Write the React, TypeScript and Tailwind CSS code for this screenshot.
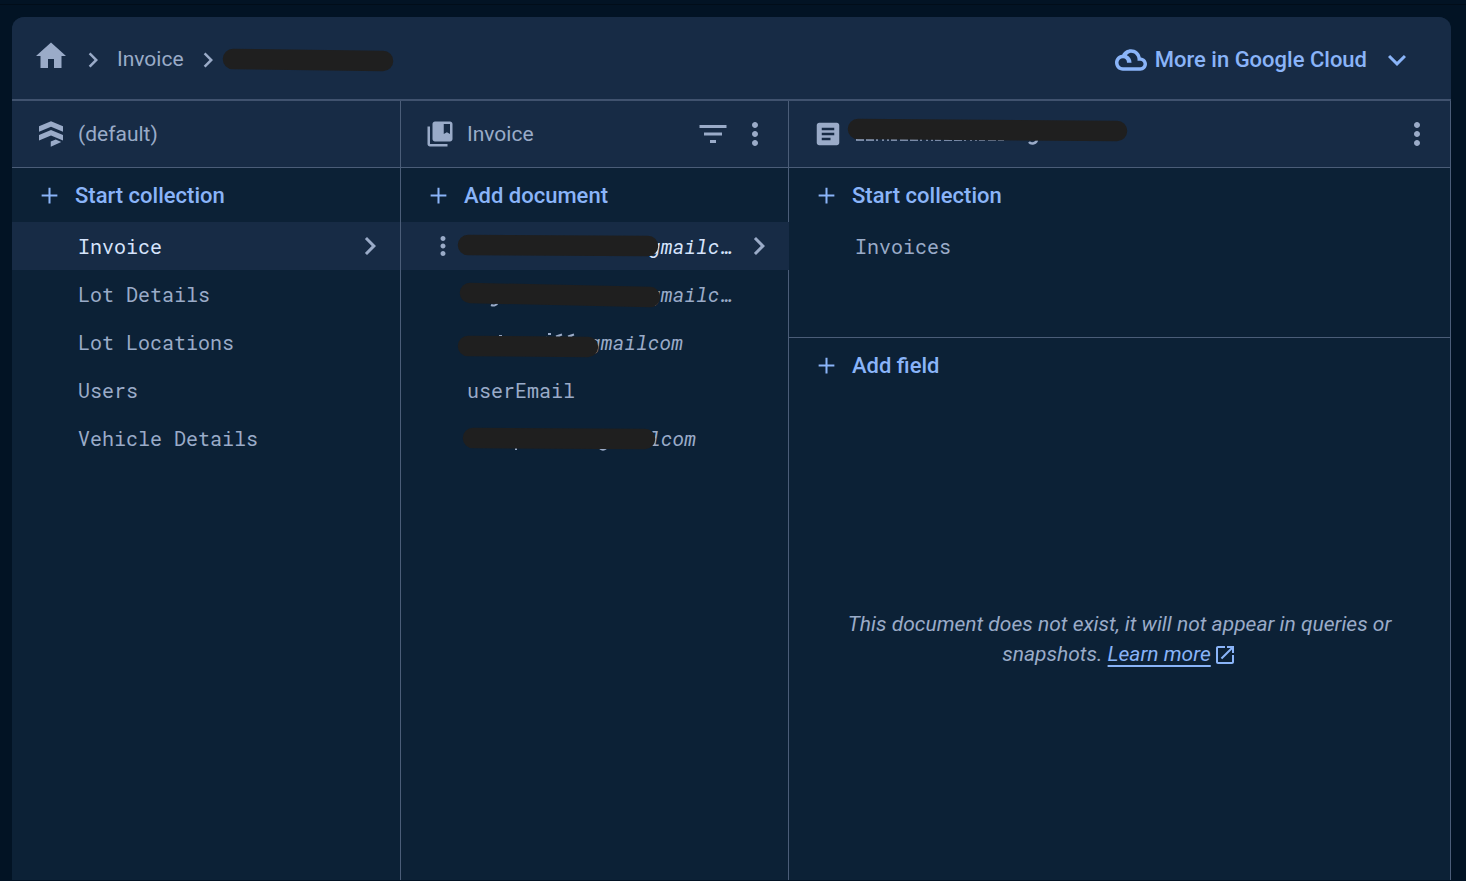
import type { ReactNode } from 'react';

type IconProps = { d: string; className: string };

function Icon({ d, className }: IconProps) {
  return (
    <svg viewBox="0 0 24 24" fill="currentColor" aria-hidden="true" className={`shrink-0 ${className}`}>
      <path d={d} />
    </svg>
  );
}

const HOME = 'M10 20v-6h4v6h5v-8h3L12 3 2 12h3v8z';
const CHEVRON_RIGHT = 'M10 6L8.59 7.41 13.17 12l-4.58 4.59L10 18l6-6z';
const CHEVRON_DOWN = 'M7.41 8.59L12 13.17l4.59-4.58L18 10l-6 6-6-6z';
const PLUS = 'M19 12.9h-6.1V19h-1.8v-6.1H5v-1.8h6.1V5h1.8v6.1H19z';
const MORE =
  'M12 8c1.1 0 2-.9 2-2s-.9-2-2-2-2 .9-2 2 .9 2 2 2zm0 2c-1.1 0-2 .9-2 2s.9 2 2 2 2-.9 2-2-.9-2-2-2zm0 6c-1.1 0-2 .9-2 2s.9 2 2 2 2-.9 2-2-.9-2-2-2z';
const FILTER = 'M10 18h4v-2h-4v2zM3 6v2h18V6H3zm3 7h12v-2H6v2z';
const COLLECTIONS =
  'M4 6H2v14c0 1.1.9 2 2 2h14v-2H4V6zm16-4H8c-1.1 0-2 .9-2 2v12c0 1.1.9 2 2 2h12c1.1 0 2-.9 2-2V4c0-1.1-.9-2-2-2zm0 10l-2.5-1.5L15 12V4h5v8z';
const DOCUMENT =
  'M19 3H5c-1.1 0-2 .9-2 2v14c0 1.1.9 2 2 2h14c1.1 0 2-.9 2-2V5c0-1.1-.9-2-2-2zm-5 14H7v-2h7v2zm3-4H7v-2h10v2zm0-4H7V7h10v2z';
const OPEN_IN_NEW =
  'M19 19H5V5h7V3H5c-1.11 0-2 .9-2 2v14c0 1.1.89 2 2 2h14c1.1 0 2-.9 2-2v-7h-2v7zM14 3v2h3.59l-9.83 9.83 1.41 1.41L19 6.41V10h2V3h-7z';
const FIRESTORE =
  'M12 1.800L21.600 5.800v4.400L12 6.200 2.400 10.200V5.800zM12 8.800l9.600 4v4.400L12 13.200l-9.600 4v-4.400zM11.800 18l4-1.700 4.400 2-8.400 3.900z';

type MarkerProps = { width: number; drop: number; className: string; children?: ReactNode };

/* Dark marker stroke that hides a private value. */
function Marker({ width, drop, className, children }: MarkerProps) {
  return (
    <svg
      width={width}
      height={28}
      role="img"
      aria-label="Redacted"
      className={`pointer-events-none absolute max-w-none overflow-visible ${className}`}
    >
      {children}
      <line x1="10" y1="12" x2={width - 10} y2={12 + drop} stroke="#1f1f1f" strokeWidth="20.500" strokeLinecap="round" />
    </svg>
  );
}

function AddButton({ children }: { children: string }) {
  return (
    <button type="button" className="flex h-[54px] w-full items-center gap-3 pl-6 text-left text-[22px] font-medium text-[#8ab4f8]">
      <Icon d={PLUS} className="size-[27px]" />
      <span>{children}</span>
    </button>
  );
}

function ColumnHeader({ icon, title, children }: { icon: ReactNode; title: ReactNode; children?: ReactNode }) {
  return (
    <header className="flex h-[67px] items-center border-b border-[#4b5d78] bg-[#172b45] pl-6">
      {icon}
      <h2 className="relative ml-3 flex-1 pt-0.5 text-[21px]">{title}</h2>
      {children}
    </header>
  );
}

const MONO = "font-['Roboto_Mono','Liberation_Mono',monospace] text-[20px]";

const collections = ['Invoice', 'Lot Details', 'Lot Locations', 'Users', 'Vehicle Details'];

function IconButton({ label, d }: { label: string; d: string }) {
  return (
    <button type="button" aria-label={label} className="flex w-[42px] justify-center">
      <Icon d={d} className="size-9" />
    </button>
  );
}

export default function App() {
  return (
    <div className="flex min-h-screen flex-col bg-[#021324] pr-[15px] pb-px pl-3 font-[Roboto,sans-serif] text-[#9aabc8]">
      <div className="-mr-[15px] -ml-3 h-[17px]">
        <div className="h-[5px] border-b border-[#010d19]" />
      </div>
      <main className="flex flex-1 flex-col rounded-t-xl bg-[#0c2136]">
        <div className="flex h-[84px] items-center justify-between rounded-t-xl border-b-2 border-[#40526e] bg-[#172b45] pt-[3px] pr-9 pl-[21px]">
          <nav aria-label="Breadcrumb" className="flex items-center text-[21px]">
            <a href="#home" aria-label="Home" className="pb-2">
              <Icon d={HOME} className="size-9" />
            </a>
            <Icon d={CHEVRON_RIGHT} className="ml-[9px] size-[30px]" />
            <a href="#invoice" className="ml-[9px]">
              Invoice
            </a>
            <Icon d={CHEVRON_RIGHT} className="ml-[9px] size-[30px]" />
            <span className="relative h-6 w-[170px]">
              <Marker width={170} drop={2} className="-top-px left-0" />
            </span>
          </nav>
          <button type="button" className="flex items-center text-[22px] font-medium text-[#8ab4f8]">
            <svg viewBox="0 0 24 24" aria-hidden="true" className="size-8" fill="currentColor">
              <path d="M19.350 10.040C18.670 6.590 15.640 4 12 4 9.110 4 6.600 5.640 5.350 8.040 2.340 8.360 0 10.910 0 14c0 3.310 2.690 6 6 6h13c2.760 0 5-2.240 5-5 0-2.640-2.050-4.780-4.650-4.960zM19 17.400H6c-1.880 0-3.400-1.520-3.400-3.400s1.520-3.400 3.400-3.400c1.900 0 3 1.200 3 3.400h3.400c0-2.600-1.300-4.700-3.500-5.600C9.700 7.300 10.800 6.600 12 6.600c2.700 0 4.900 2.200 4.900 4.900v1.100H19c1.320 0 2.400 1.080 2.400 2.400s-1.080 2.400-2.400 2.400z" />
            </svg>
            <span className="ml-2">More in Google Cloud</span>
            <Icon d={CHEVRON_DOWN} className="ml-3 size-9" />
          </button>
        </div>

        <div className="grid flex-1 grid-cols-[minmax(0,388fr)_minmax(0,388fr)_minmax(0,663fr)]">
          <section>
            <ColumnHeader icon={<Icon d={FIRESTORE} className="size-[30px]" />} title="(default)" />
            <AddButton>Start collection</AddButton>
            <ul className={MONO}>
              {collections.map((name, i) => (
                <li key={name}>
                  <a
                    href="#collection"
                    className={`flex h-12 items-center justify-between pr-3 pl-[66px] ${i === 0 ? 'bg-[#172b45] text-[#d6e4fc]' : ''}`}
                  >
                    {name}
                    {i === 0 && <Icon d={CHEVRON_RIGHT} className="size-9 text-[#9aabc8]" />}
                  </a>
                </li>
              ))}
            </ul>
          </section>

          <section className="border-l border-[#4b5d78]">
            <ColumnHeader icon={<Icon d={COLLECTIONS} className="size-[30px]" />} title="Invoice">
              <div className="flex pr-3">
                <IconButton label="Filter" d={FILTER} />
                <IconButton label="More options" d={MORE} />
              </div>
            </ColumnHeader>
            <AddButton>Add document</AddButton>
            <ul className={MONO}>
              <li className="relative z-10 -mr-px flex h-12 items-center bg-[#172b45] pr-3 pl-[27px]">
                <button type="button" aria-label="Document options">
                  <Icon d={MORE} className="size-[30px]" />
                </button>
                <a href="#document" className="relative ml-[9px] flex-1 pl-[182px] text-[#d6e4fc] italic">
                  gmailc…
                  <Marker width={200} drop={1} className="top-[2px] -left-[9px]" />
                </a>
                <Icon d={CHEVRON_RIGHT} className="size-9" />
              </li>
              <li className="flex h-12 items-center pl-[66px]">
                <a href="#document" className="relative pl-[182px] italic">
                  gmailc…
                  <Marker width={200} drop={4} className="top-[2px] -left-[7px]">
                    <path d="M31 24c3 1.500 6 0 7-3M11 20.500h4" fill="none" stroke="currentColor" strokeWidth="2" />
                  </Marker>
                </a>
              </li>
              <li className="flex h-12 items-center pl-[66px]">
                <a href="#document" className="relative pl-[122px] italic">
                  gmailcom
                  <Marker width={140} drop={1} className="top-[7px] -left-[9px]">
                    <path
                      d="M41 2h3M90 0h3M89 3l-1 2M98 2.500l6-2M102 1l-1 3M110 2.500l6-2M114 1l-1 3"
                      fill="none"
                      stroke="currentColor"
                      strokeWidth="2"
                    />
                  </Marker>
                </a>
              </li>
              <li className="flex h-12 items-center pl-[66px]">
                <a href="#document">userEmail</a>
              </li>
              <li className="flex h-12 items-center pl-[66px]">
                <a href="#document" className="relative pl-[182px] italic">
                  lcom
                  <Marker width={192} drop={1} className="top-[3px] -left-[4px]">
                    <path d="M53 21v3M137 22.500c2 1.500 4 1.500 6 0" fill="none" stroke="currentColor" strokeWidth="2" />
                  </Marker>
                </a>
              </li>
            </ul>
          </section>

          <section className="flex flex-col border-x border-[#4b5d78]">
            <ColumnHeader
              icon={<Icon d={DOCUMENT} className="size-[30px]" />}
              title={
                <span className="block h-8">
                  <Marker width={279} drop={2} className="top-0 -left-[7px]">
                    <path
                      d="M8 22.500h148"
                      fill="none"
                      stroke="currentColor"
                      strokeWidth="2.500"
                      strokeDasharray="8 2 8 2 2 4 2 3 2 2 6 3"
                    />
                    <path d="M181 25c2 2.500 8 2 8-3" fill="none" stroke="currentColor" strokeWidth="2.500" />
                  </Marker>
                </span>
              }
            >
              <div className="flex pr-3">
                <IconButton label="Document options" d={MORE} />
              </div>
            </ColumnHeader>
            <div className="h-[170px] border-b border-[#4b5d78]">
              <AddButton>Start collection</AddButton>
              <a href="#subcollection" className={`flex h-12 items-center pl-[66px] ${MONO}`}>
                Invoices
              </a>
            </div>
            <AddButton>Add field</AddButton>
            <div className="flex flex-1 items-center justify-center px-12 pt-1.5 text-center">
              <p className="text-[21px] leading-[30px] italic">
                This document does not exist, it will not appear in queries or snapshots.{' '}
                <a href="#learn-more" className="text-[#8ab4f8] underline decoration-2 underline-offset-4">
                  Learn more
                  <Icon d={OPEN_IN_NEW} className="ml-[2px] inline-block size-6 align-middle" />
                </a>
              </p>
            </div>
          </section>
        </div>
      </main>
    </div>
  );
}
